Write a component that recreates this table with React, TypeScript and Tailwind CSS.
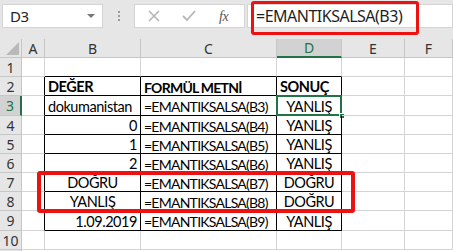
import React from 'react';

const cols = ['A', 'B', 'C', 'D', 'E', 'F'];
const rowHeights = [19, 19, 20, 19, 19, 19, 19, 19, 20, 19];

type Cell = { text?: string; align?: 'left' | 'right' | 'center'; bold?: boolean };

const data: Record<number, Cell[]> = {
  2: [{ text: 'DEĞER', bold: true }, { text: 'FORMÜL METNİ', bold: true }, { text: 'SONUÇ', bold: true }],
  3: [{ text: 'dokumanistan' }, { text: '=EMANTIKSALSA(B3)' }, { text: 'YANLIŞ', align: 'center' }],
  4: [{ text: '0', align: 'right' }, { text: '=EMANTIKSALSA(B4)' }, { text: 'YANLIŞ', align: 'center' }],
  5: [{ text: '1', align: 'right' }, { text: '=EMANTIKSALSA(B5)' }, { text: 'YANLIŞ', align: 'center' }],
  6: [{ text: '2', align: 'right' }, { text: '=EMANTIKSALSA(B6)' }, { text: 'YANLIŞ', align: 'center' }],
  7: [{ text: 'DOĞRU', align: 'center' }, { text: '=EMANTIKSALSA(B7)' }, { text: 'DOĞRU', align: 'center' }],
  8: [{ text: 'YANLIŞ', align: 'center' }, { text: '=EMANTIKSALSA(B8)' }, { text: 'DOĞRU', align: 'center' }],
  9: [{ text: '1.09.2019', align: 'right' }, { text: '=EMANTIKSALSA(B9)' }, { text: 'YANLIŞ', align: 'center' }],
};

const alignCls = { left: 'justify-start', right: 'justify-end', center: 'justify-center' };

function FormulaBar() {
  return (
    <div className="h-[39px] bg-[#e6e6e6] relative flex items-start pt-[4px] pl-[2px]">
      {/* name box */}
      <div className="w-[101px] h-[24px] bg-white border border-[#d4d4d4] flex items-center justify-between pl-[7px] pr-[7px] text-[15px] text-[#222] font-['Noto_Sans',sans-serif]">
        <span>D3</span>
        <span className="w-0 h-0 border-l-[4px] border-r-[4px] border-t-[4px] border-l-transparent border-r-transparent border-t-[#777]" />
      </div>
      <div className="w-[31px] h-[24px] flex flex-col items-center justify-center gap-[2px]">
        <span className="w-[2px] h-[2px] bg-[#9a9a9a]" />
        <span className="w-[2px] h-[2px] bg-[#9a9a9a]" />
        <span className="w-[2px] h-[2px] bg-[#9a9a9a]" />
      </div>
      <div className="w-[111px] h-[24px] bg-white border border-[#d4d4d4] flex items-center">
        <svg width="14" height="14" viewBox="0 0 14 14" className="ml-[12px]">
          <path d="M2 2 L12 12 M12 2 L2 12" stroke="#b5b5b5" strokeWidth="1.6" />
        </svg>
        <svg width="16" height="14" viewBox="0 0 16 14" className="ml-[20px]">
          <path d="M2 7 L6 11 L14 2" stroke="#b5b5b5" strokeWidth="1.8" fill="none" />
        </svg>
        <span className="ml-[22px] text-[14px] italic text-[#555] font-['Liberation_Serif',serif]">fx</span>
      </div>
      <div className="ml-[2px] flex-1 h-[24px] bg-white border border-[#d4d4d4] flex items-center pl-[8px] text-[16px] tracking-[-0.5px] text-[#1f1f1f] font-['Noto_Sans',sans-serif]">
        =EMANTIKSALSA(B3)
      </div>
      <div className="absolute left-[251px] top-[1px] w-[168px] h-[34px] border-[3px] border-[#ee1111] rounded-[3px]" />
    </div>
  );
}

export default function App() {
  return (
    <div className="w-[453px] h-[251px] overflow-hidden bg-white font-['Lato',sans-serif] text-[14.5px] tracking-[-0.45px] text-black relative">
      <FormulaBar />
      <div className="grid grid-cols-[22px_23px_96px_136px_65px_63px_1fr]">
        {/* header row */}
        <div className="h-[19px] bg-[#e6e6e6] border-r border-b border-[#c6c6c6] relative">
          <svg className="absolute right-[2px] bottom-[2px]" width="13" height="13" viewBox="0 0 13 13">
            <path d="M13 0 L13 13 L0 13 Z" fill="#b9b9b9" />
          </svg>
        </div>
        {cols.map((c) => (
          <div
            key={c}
            className={`h-[19px] flex items-center justify-center text-[14px] tracking-normal font-['Noto_Sans',sans-serif] border-r ${
              c === 'D'
                ? 'bg-[#d2d2d2] text-[#217346] border-b-2 border-b-[#217346] border-r-[#c6c6c6]'
                : 'bg-[#e6e6e6] text-[#333] border-b border-[#c6c6c6]'
            }`}
          >
            {c}
          </div>
        ))}
        {rowHeights.map((h, i) => {
          const r = i + 1;
          const row = data[r];
          const inTable = r >= 2 && r <= 9;
          return (
            <React.Fragment key={r}>
              <div
                style={{ height: h }}
                className={`flex items-center justify-center text-[14px] tracking-normal font-['Noto_Sans',sans-serif] border-b border-[#c6c6c6] ${
                  r === 3
                    ? 'bg-[#d2d2d2] text-[#217346] border-r-2 border-r-[#217346]'
                    : 'bg-[#e6e6e6] text-[#333] border-r border-r-[#c6c6c6]'
                }`}
              >
                {r}
              </div>
              {cols.map((c, ci) => {
                const tcell = inTable && ci >= 1 && ci <= 3;
                const cell = tcell && row ? row[ci - 1] : undefined;
                let bcls = 'border-r border-b border-[#d4d4d4]';
                if (tcell) bcls = 'border-r border-b border-black';
                else if (inTable && ci === 0) bcls = 'border-r border-b border-r-black border-b-[#d4d4d4]';
                else if (r === 1 && ci >= 1 && ci <= 3) bcls = 'border-r border-b border-r-[#d4d4d4] border-b-black';
                const formulaCol = ci === 2;
                return (
                  <div
                    key={c}
                    style={{ height: h }}
                    className={`${bcls} flex items-center pt-[2px] px-[3px] whitespace-nowrap relative ${
                      alignCls[cell?.align ?? 'left']
                    } ${cell?.bold ? 'font-bold' : ''} ${formulaCol ? 'text-[14px] tracking-[-0.75px]' : ''}`}
                  >
                    {cell?.text}
                    {r === 3 && c === 'D' && (
                      <>
                        <span className="absolute left-[-1px] top-[-1px] right-[-1px] bottom-[-1px] border-2 border-[#217346]" />
                        <span className="absolute right-[-4px] bottom-[-4px] w-[6px] h-[6px] bg-[#217346] border border-white" />
                      </>
                    )}
                  </div>
                );
              })}
            </React.Fragment>
          );
        })}
        <div className="h-[2px] bg-[#e6e6e6] border-r border-[#c6c6c6]" />
      </div>
      <div className="absolute left-[37px] top-[171px] w-[318px] h-[42px] border-4 border-[#ee1111] rounded-[3px]" />
    </div>
  );
}
